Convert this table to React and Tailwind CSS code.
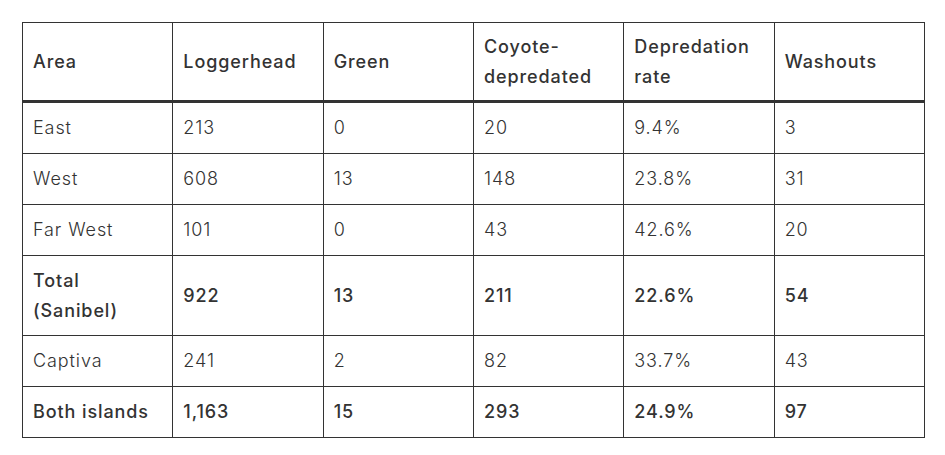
import React from 'react';

const rows = [
  { area: 'East', cells: ['213', '0', '20', '9.4%', '3'] },
  { area: 'West', cells: ['608', '13', '148', '23.8%', '31'] },
  { area: 'Far West', cells: ['101', '0', '43', '42.6%', '20'] },
  { area: <>Total<br />(Sanibel)</>, cells: ['922', '13', '211', '22.6%', '54'], bold: true, tall: true },
  { area: 'Captiva', cells: ['241', '2', '82', '33.7%', '43'] },
  { area: 'Both islands', cells: ['1,163', '15', '293', '24.9%', '97'], bold: true },
];

const headers = ['Area', 'Loggerhead', 'Green', <>Coyote-<br />depredated</>, <>Depredation<br />rate</>, 'Washouts'];

export default function App() {
  return (
    <div className="min-h-[455px] bg-white pl-[22px] pt-[22px] font-['Inter',sans-serif] text-[18px] leading-[30px] tracking-[0.05em] text-[#333]">
      <table className="w-[903px] table-fixed border-collapse">
        <thead>
          <tr className="h-[79px] border-b-[3px] border-b-[#333]">
            {headers.map((h, i) => (
              <th key={i} className="border border-[#333] px-[10px] text-left align-middle font-medium">
                {h}
              </th>
            ))}
          </tr>
        </thead>
        <tbody>
          {rows.map((r, i) => (
            <tr key={i} className={`${r.bold ? 'font-medium' : 'font-light'} ${r.tall ? 'leading-[29.5px]' : ''}`}>
              <td className="border border-[#333] px-[10px] py-[10px] align-middle">{r.area}</td>
              {r.cells.map((c, j) => (
                <td key={j} className="border border-[#333] px-[10px] py-[10px] align-middle">
                  {c}
                </td>
              ))}
            </tr>
          ))}
        </tbody>
      </table>
    </div>
  );
}
